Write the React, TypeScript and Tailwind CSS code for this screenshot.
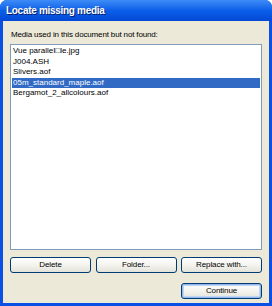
import React from "react";

const files = [
  "Vue paralleI□le.jpg",
  "J004.ASH",
  "Slivers.aof",
  "05m_standard_maple.aof",
  "Bergamot_2_allcolours.aof",
];

function XpButton({ label, primary }: { label: string; primary?: boolean }) {
  return (
    <button
      className={
        "h-[16px] w-[81px] rounded-[3px] border border-[#003c74] bg-gradient-to-b from-white via-[#f4f3ee] to-[#e3e2da] text-[8px] leading-none tracking-[-0.1px] text-black " +
        (primary ? "shadow-[inset_0_0_0_1px_#98b8ea,inset_0_0_0_2px_#bcd4f6]" : "")
      }
    >
      {label}
    </button>
  );
}

export default function App() {
  const selected = 3;
  return (
    <div className="h-[306px] w-[272px] font-['Liberation_Sans',sans-serif]">
      <div className="flex h-full flex-col overflow-hidden rounded-t-[7px] bg-[#0a50e4]">
        <div className="flex h-[21px] shrink-0 items-center bg-gradient-to-b from-[#3d8cf7] via-[#0a5ee8] to-[#0548d6] pl-[6px]">
          <span className="text-[10px] font-bold tracking-[-0.3px] text-white [text-shadow:1px_1px_0_#0a1e6a]">
            Locate missing media
          </span>
        </div>
        <div className="mx-[3px] mb-[3px] flex flex-1 flex-col bg-[#ece9d8] px-[7px]">
          <div className="mt-[8px] pl-[1px] text-[8px] leading-[11px] tracking-[-0.15px] text-black">
            Media used in this document but not found:
          </div>
          <div className="mt-[4px] h-[206px] border border-[#7f9db9] bg-white p-[1px]">
            {files.map((f, i) => (
              <div
                key={f}
                className={
                  "h-[10.5px] pl-[1px] text-[8px] leading-[10.5px] whitespace-nowrap " +
                  (i === selected ? "bg-[#316ac5] text-white" : "text-black")
                }
              >
                {f}
              </div>
            ))}
          </div>
          <div className="mt-[7px] flex justify-between">
            <XpButton label="Delete" />
            <XpButton label="Folder..." />
            <XpButton label="Replace with..." />
          </div>
          <div className="mt-[10px] flex justify-end">
            <XpButton label="Continue" primary />
          </div>
        </div>
      </div>
    </div>
  );
}
